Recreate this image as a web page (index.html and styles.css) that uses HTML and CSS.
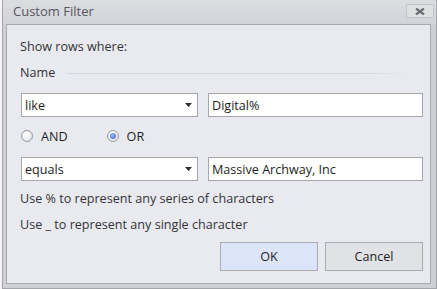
FILE: index.html
```html
<!DOCTYPE html>
<html>
<head>
<meta charset="utf-8">
<link rel="stylesheet" href="styles.css">
</head>
<body>
<div class="window">
  <div class="titlebar">
    <span class="title">Custom Filter</span>
    <button class="close" type="button" aria-label="Close">
      <svg width="10" height="7" viewBox="0 0 10 7"><path d="M1 0.5 L9 6.5 M9 0.5 L1 6.5" stroke="#6c6d75" stroke-width="2.2" fill="none"/></svg>
    </button>
  </div>
  <div class="content">
    <div class="text">Show rows where:</div>
    <div class="group"><span>Name</span><span class="rule"></span></div>
    <div class="row">
      <div class="combo"><span>like</span><svg width="7" height="4" viewBox="0 0 7 4"><path d="M0 0 H7 L3.5 4 Z" fill="#2d2d35"/></svg></div>
      <div class="input">Digital%</div>
    </div>
    <div class="radios">
      <label class="radio"><span class="dot"></span>AND</label>
      <label class="radio checked"><span class="dot"></span>OR</label>
    </div>
    <div class="row">
      <div class="combo"><span>equals</span><svg width="7" height="4" viewBox="0 0 7 4"><path d="M0 0 H7 L3.5 4 Z" fill="#2d2d35"/></svg></div>
      <div class="input">Massive Archway, Inc</div>
    </div>
    <div class="text hint">Use % to represent any series of characters</div>
    <div class="text hint">Use _ to represent any single character</div>
    <div class="buttons">
      <button class="btn ok" type="button">OK</button>
      <button class="btn" type="button">Cancel</button>
    </div>
  </div>
</div>
</body>
</html>
```
FILE: styles.css
```css
html, body {
  margin: 0;
  padding: 0;
}
body {
  width: 437px;
  height: 289px;
  background: #f4f4f6;
  font-family: "Open Sans", "Noto Sans", sans-serif;
  font-size: 12.6px;
  color: #333338;
  overflow: hidden;
}
.window {
  margin-left: 2px;
  width: 435px;
  height: 289px;
  box-sizing: border-box;
  border: 1px solid #a4a5ad;
  border-top: none;
  background: #cfd0d5;
  display: flex;
  flex-direction: column;
  padding: 0 5px 4px 3px;
}
.titlebar {
  height: 24px;
  flex: none;
  display: flex;
  align-items: flex-start;
  justify-content: space-between;
  background: linear-gradient(#dcdde1, #d3d4d9);
  margin: 0 -5px 0 -3px;
  padding: 0 2px 0 10px;
}
.title {
  color: #55565e;
  font-size: 13px;
  line-height: 22px;
}
.close {
  margin-top: 4px;
  width: 28px;
  height: 14px;
  padding: 0;
  border: 1px solid #c4c5ca;
  background: #dfe0e4;
  display: flex;
  align-items: center;
  justify-content: center;
}
.content {
  flex: 1;
  border: 1px solid #a9aab1;
  background: #e9eaef;
  padding: 14px 7px 0 13px;
  display: flex;
  flex-direction: column;
}
.text {
  line-height: 16px;
}
.group {
  margin-top: 10px;
  display: flex;
  align-items: center;
  line-height: 16px;
}
.rule {
  flex: none;
  width: 345px;
  height: 1px;
  margin-left: 12px;
  margin-top: 1px;
  background: linear-gradient(to right, #d6d7dc, #d6d7dc 85%, rgba(214,215,220,0));
}
.row {
  display: flex;
  gap: 10px;
  margin-left: 1px;
  margin-top: 12px;
}
.radios + .row {
  margin-top: 13px;
}
.combo, .input {
  box-sizing: border-box;
  height: 24px;
  border: 1px solid #a6a7ae;
  background: #fff;
  display: flex;
  align-items: center;
  padding-left: 3px;
  color: #1e1e22;
}
.combo {
  width: 177px;
  justify-content: space-between;
  padding-right: 5px;
}
.input {
  width: 215px;
}
.radios {
  margin-top: 11px;
  display: flex;
  height: 16px;
  align-items: center;
  padding-left: 1px;
}
.radio {
  display: flex;
  align-items: center;
  color: #1e1e22;
}
.radio + .radio {
  margin-left: 39px;
}
.dot {
  box-sizing: border-box;
  width: 12px;
  height: 12px;
  border-radius: 50%;
  border: 1px solid #9a9ba3;
  background: radial-gradient(circle at 40% 35%, #ffffff, #e6e7eb 70%);
  margin-right: 8px;
  position: relative;
}
.checked .dot::after {
  content: "";
  position: absolute;
  left: 2px;
  top: 2px;
  width: 6px;
  height: 6px;
  border-radius: 50%;
  background: radial-gradient(circle at 40% 35%, #9bb6ee, #3d65c4);
}
.hint {
  margin-top: 10px;
}
.buttons {
  margin-top: 9px;
  display: flex;
  justify-content: flex-end;
  gap: 7px;
}
.btn {
  width: 98px;
  height: 29px;
  box-sizing: border-box;
  border: 1px solid #abacb3;
  background: #e1e2e6;
  font-family: inherit;
  font-size: 12.6px;
  color: #1e1e22;
  padding: 0;
}
.btn.ok {
  background: #dce4f9;
}
```
